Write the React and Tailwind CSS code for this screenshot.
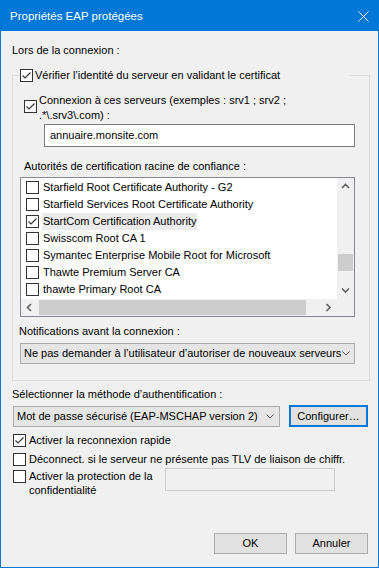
import React from 'react'

function Check({ checked }) {
  return (
    <span className="w-[13px] h-[13px] border border-[#333333] bg-white shrink-0 flex items-center justify-center">
      {checked && (
        <svg width="11" height="11" viewBox="0 0 11 11">
          <path d="M1.5 5.5 L4 8 L9.5 2.5" fill="none" stroke="#333333" strokeWidth="1.1" />
        </svg>
      )}
    </span>
  )
}

function Arrow({ dir }) {
  const paths = {
    up: 'M1 5 L4.5 1.5 L8 5',
    down: 'M1 1.5 L4.5 5 L8 1.5',
    left: 'M5 1 L1.5 4.5 L5 8',
    right: 'M1.5 1 L5 4.5 L1.5 8',
  }
  const vertical = dir === 'up' || dir === 'down'
  return (
    <svg width={vertical ? 9 : 7} height={vertical ? 7 : 9} viewBox={vertical ? '0 0 9 7' : '0 0 7 9'}>
      <path d={paths[dir]} fill="none" stroke="#606060" strokeWidth="1.6" />
    </svg>
  )
}

function Chevron() {
  return (
    <svg width="8" height="5" viewBox="0 0 8 5">
      <path d="M0.5 0.5 L4 4 L7.5 0.5" fill="none" stroke="#555555" strokeWidth="1" />
    </svg>
  )
}

const authorities = [
  { name: 'Starfield Root Certificate Authority - G2' },
  { name: 'Starfield Services Root Certificate Authority' },
  { name: 'StartCom Certification Authority', checked: true, selected: true },
  { name: 'Swisscom Root CA 1' },
  { name: 'Symantec Enterprise Mobile Root for Microsoft' },
  { name: 'Thawte Premium Server CA' },
  { name: 'thawte Primary Root CA' },
]

export default function App() {
  return (
    <div className="w-[379px] h-[568px] border border-[#0078d7] bg-[#f0f0f0] flex flex-col font-['Liberation_Sans',Arial,sans-serif] text-[11px] text-black overflow-hidden">
      <div className="h-[30px] shrink-0 bg-[#0078d7] flex items-center justify-between pl-[9px] pr-[9px] text-white text-[11.5px]">
        <span className="leading-[16px]">Propriétés EAP protégées</span>
        <svg width="11" height="11" viewBox="0 0 11 11">
          <path d="M0.5 0.5 L10.5 10.5 M10.5 0.5 L0.5 10.5" stroke="#ffffff" strokeWidth="1" />
        </svg>
      </div>

      <div className="flex-1 flex flex-col">
        <div className="ml-[11px] mt-[11px] h-[16px] leading-[16px]">Lors de la connexion :</div>

        <div className="ml-[11px] mt-[17px] w-[358px] h-[306px] border border-[#dcdcdc] flex flex-col shrink-0">
          <div className="-mt-[8px] ml-[7px] w-[330px] h-[14px] bg-[#f0f0f0] flex items-center gap-[2px]">
            <Check checked />
            <span className="leading-[14px] whitespace-nowrap">Vérifier l’identité du serveur en validant le certificat</span>
          </div>

          <div className="mt-[11px] ml-[11px] flex items-start gap-[2px]">
            <span className="mt-[7px]"><Check checked /></span>
            <div className="leading-[15px] whitespace-nowrap">
              <div>Connexion à ces serveurs (exemples : srv1 ; srv2 ;</div>
              <div>.*\.srv3\.com) :</div>
            </div>
          </div>

          <div className="mt-[1px] ml-[31px] w-[311px] h-[23px] border border-[#7a7a7a] bg-white flex items-center pl-[5px]">
            annuaire.monsite.com
          </div>

          <div className="mt-[11px] ml-[11px] h-[16px] leading-[16px]">Autorités de certification racine de confiance :</div>

          <div className="mt-[3px] ml-[7px] w-[335px] h-[140px] border border-[#828790] flex flex-col">
            <div className="flex h-[121px]">
              <div className="flex-1 bg-white pt-[1px] flex flex-col">
                {authorities.map(a => (
                  <div key={a.name} className="h-[17px] flex items-center pl-[5px] gap-[3px] whitespace-nowrap">
                    <Check checked={a.checked} />
                    <span className={a.selected ? 'px-[1px] h-[17px] leading-[17px] bg-[#ebebeb]' : 'px-[1px] leading-[17px]'}>{a.name}</span>
                  </div>
                ))}
              </div>
              <div className="w-[17px] bg-[#f0f0f0] flex flex-col">
                <div className="h-[17px] flex items-center justify-center"><Arrow dir="up" /></div>
                <div className="flex-1">
                  <div className="mt-[59px] mx-auto w-[15px] h-[17px] bg-[#cdcdcd]" />
                </div>
                <div className="h-[17px] flex items-center justify-center"><Arrow dir="down" /></div>
              </div>
            </div>
            <div className="h-[17px] flex bg-[#f0f0f0]">
              <div className="w-[17px] flex items-center justify-center"><Arrow dir="left" /></div>
              <div className="flex-1 flex items-center">
                <div className="ml-[1px] w-[267px] h-[15px] bg-[#cdcdcd]" />
              </div>
              <div className="w-[17px] flex items-center justify-center"><Arrow dir="right" /></div>
              <div className="w-[17px] bg-[#f0f0f0]" />
            </div>
          </div>

          <div className="mt-[6px] ml-[6px] h-[16px] leading-[16px]">Notifications avant la connexion :</div>

          <div className="mt-[4px] ml-[7px] w-[335px] h-[21px] border border-[#acacac] bg-[#e5e5e5] flex items-center justify-between pl-[3px] pr-[4px]">
            <span className="whitespace-nowrap">Ne pas demander à l’utilisateur d’autoriser de nouveaux serveurs</span>
            <Chevron />
          </div>
        </div>

        <div className="ml-[11px] mt-[5px] h-[16px] leading-[16px]">Sélectionner la méthode d’authentification :</div>

        <div className="mt-[3px] ml-[12px] flex items-center">
          <div className="w-[267px] h-[21px] border border-[#acacac] bg-[#e5e5e5] flex items-center justify-between pl-[3px] pr-[5px]">
            <span className="whitespace-nowrap">Mot de passe sécurisé (EAP-MSCHAP version 2)</span>
            <Chevron />
          </div>
          <button className="ml-[9px] w-[79px] h-[22px] border-2 border-[#0078d7] bg-[#e1e1e1] flex items-center justify-center">
            Configurer…
          </button>
        </div>

        <div className="mt-[5px] ml-[12px] h-[16px] flex items-center gap-[3px]">
          <Check checked />
          <span className="leading-[16px]">Activer la reconnexion rapide</span>
        </div>

        <div className="mt-[3px] ml-[12px] h-[16px] flex items-center gap-[3px]">
          <Check />
          <span className="leading-[16px] whitespace-nowrap">Déconnect. si le serveur ne présente pas TLV de liaison de chiffr.</span>
        </div>

        <div className="mt-[2px] ml-[12px] flex items-start gap-[3px]">
          <span className="mt-[1px]"><Check /></span>
          <div className="w-[133px] leading-[14px] whitespace-nowrap">
            <div>Activer la protection de la</div>
            <div>confidentialité</div>
          </div>
          <div className="-mt-[1px] w-[170px] h-[23px] border border-[#cccccc] bg-[#f0f0f0]" />
        </div>

        <div className="flex-1" />

        <div className="flex justify-end gap-[8px] pr-[10px] mb-[13px]">
          <button className="w-[73px] h-[21px] border border-[#adadad] bg-[#e1e1e1] flex items-center justify-center">OK</button>
          <button className="w-[73px] h-[21px] border border-[#adadad] bg-[#e1e1e1] flex items-center justify-center">Annuler</button>
        </div>
      </div>
    </div>
  )
}
